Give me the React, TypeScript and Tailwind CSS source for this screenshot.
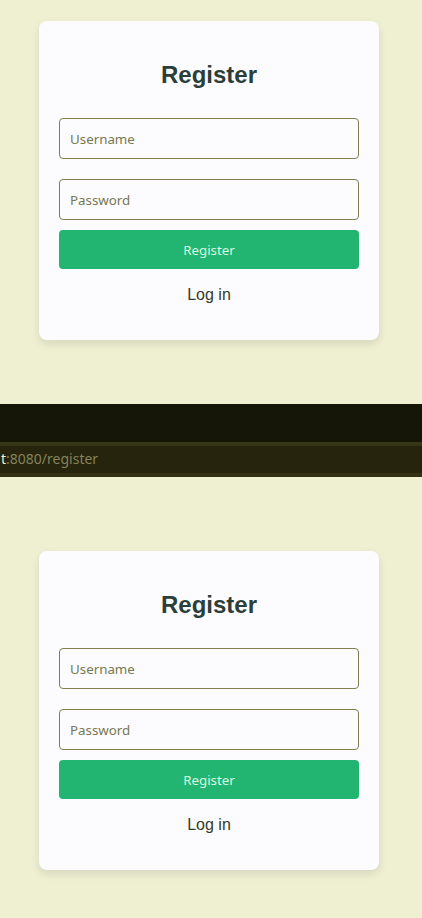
const field =
  "block h-[41px] w-full rounded-[4px] border border-[#7e7e50] bg-[#fcfcff] px-[10px] font-['Noto_Sans',sans-serif] text-[13.333px] text-[#333] placeholder:text-[#777750] placeholder:opacity-100 outline-none";

function RegisterCard() {
  return (
    <form
      className="ml-[39px] h-[319px] w-[340px] rounded-[8px] bg-[#fcfcfe] px-5 pt-10 text-center font-['Liberation_Sans',Arial,sans-serif] shadow-[0_4px_8px_rgba(0,0,0,0.1)]"
      onSubmit={(e) => e.preventDefault()}
    >
      <h2 className="mb-[30px] text-[24px] leading-[27px] font-bold text-[#2c3e3a]">Register</h2>
      <input className={field} type="text" placeholder="Username" />
      <input className={field + " mt-5"} type="password" placeholder="Password" />
      <button
        className="mt-[10px] block h-[39px] w-full rounded-[4px] bg-[#22b571] pt-[2px] font-['Noto_Sans',sans-serif] text-[13.333px] text-[#d8f8e0]"
        type="submit"
      >
        Register
      </button>
      <a className="mt-[17px] block text-[16px] leading-[18px] text-[#343b28]" href="#login">
        Log in
      </a>
    </form>
  );
}

export default function App() {
  return (
    <main className="h-[918px] w-[422px] overflow-hidden bg-[#eff0d2]">
      <section className="h-[404px] pt-[21px]">
        <RegisterCard />
      </section>
      <header className="flex h-[73px] flex-col bg-[#151508]">
        <div className="h-[38px]" />
        <div className="h-1 bg-[#373714]" />
        <div className="flex flex-1 items-start border-b-4 border-[#343014] bg-[#26240c] pt-[3px] pl-px font-['Noto_Sans',sans-serif] text-[14px] leading-[20px]">
          <span className="whitespace-nowrap text-[#83835c]">
            <span className="text-[#f0f0d0]">t</span>:8080/register
          </span>
        </div>
      </header>
      <section className="h-[441px] pt-[74px]">
        <RegisterCard />
      </section>
    </main>
  );
}
